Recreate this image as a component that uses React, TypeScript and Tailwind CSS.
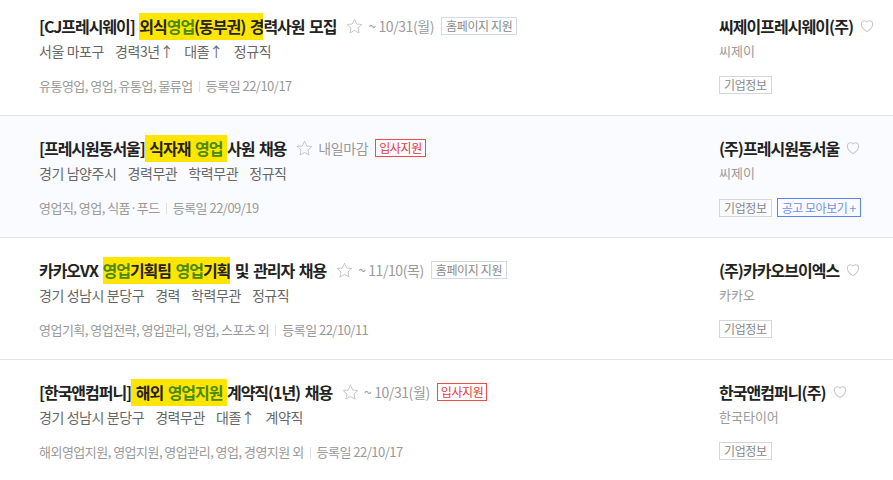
import type { ReactNode } from 'react';

type Job = {
  title: ReactNode;
  deadline: string;
  badge: 'home' | 'apply';
  conditions: string[];
  tags: string;
  date: string;
  company: string;
  group: string;
  more?: boolean;
  tinted?: boolean;
};

const G = ({ children }: { children: ReactNode }) => <span className="text-[#4a8a12]">{children}</span>;
const Mark = ({ children }: { children: ReactNode }) => (
  <span className="bg-[#ffe500] pb-[2px] pt-[1px]">{children}</span>
);

const jobs: Job[] = [
  {
    title: (
      <>
        [CJ프레시웨이] <Mark>외식<G>영업</G>(동부권) 경</Mark>력사원 모집
      </>
    ),
    deadline: '~ 10/31(월)',
    badge: 'home',
    conditions: ['서울 마포구', '경력3년↑', '대졸↑', '정규직'],
    tags: '유통영업, 영업, 유통업, 물류업',
    date: '등록일 22/10/17',
    company: '씨제이프레시웨이(주)',
    group: '씨제이',
  },
  {
    title: (
      <>
        [프레시원동서울]<Mark> 식자재 <G>영업</G> </Mark>사원 채용
      </>
    ),
    deadline: '내일마감',
    badge: 'apply',
    conditions: ['경기 남양주시', '경력무관', '학력무관', '정규직'],
    tags: '영업직, 영업, 식품·푸드',
    date: '등록일 22/09/19',
    company: '(주)프레시원동서울',
    group: '씨제이',
    more: true,
    tinted: true,
  },
  {
    title: (
      <>
        카카오VX <Mark><G>영업</G>기획팀 <G>영업</G>기획</Mark> 및 관리자 채용
      </>
    ),
    deadline: '~ 11/10(목)',
    badge: 'home',
    conditions: ['경기 성남시 분당구', '경력', '학력무관', '정규직'],
    tags: '영업기획, 영업전략, 영업관리, 영업, 스포츠 외',
    date: '등록일 22/10/11',
    company: '(주)카카오브이엑스',
    group: '카카오',
  },
  {
    title: (
      <>
        [한국앤컴퍼니]<Mark> 해외 <G>영업지원</G> </Mark>계약직(1년) 채용
      </>
    ),
    deadline: '~ 10/31(월)',
    badge: 'apply',
    conditions: ['경기 성남시 분당구', '경력무관', '대졸↑', '계약직'],
    tags: '해외영업지원, 영업지원, 영업관리, 영업, 경영지원 외',
    date: '등록일 22/10/17',
    company: '한국앤컴퍼니(주)',
    group: '한국타이어',
  },
];

function Star() {
  return (
    <svg width="19" height="19" viewBox="0 0 24 24" fill="none" stroke="#c4c4c4" strokeWidth="1.2" strokeLinejoin="round">
      <path d="M12 2.8l2.8 6 6.5.7-4.9 4.4 1.4 6.4L12 17l-5.8 3.3 1.4-6.4-4.9-4.4 6.5-.7z" />
    </svg>
  );
}

function Heart() {
  return (
    <svg width="16" height="16" viewBox="0 0 24 24" fill="none" stroke="#c8c8c8" strokeWidth="1.6" strokeLinejoin="round">
      <path d="M12 20.5s-8.5-5.4-8.5-11.2C3.5 6.3 5.7 4 8.4 4c1.6 0 2.9.8 3.6 2 .7-1.2 2-2 3.6-2 2.7 0 4.9 2.3 4.9 5.3 0 5.8-8.5 11.2-8.5 11.2z" />
    </svg>
  );
}

function JobRow({ job }: { job: Job }) {
  return (
    <div
      className={`flex h-[122px] border-b border-[#e4e4e4] pl-[39px] pt-[21px] ${job.tinted ? 'bg-[#fafbfe]' : 'bg-white'}`}
    >
      <div className="flex flex-1 flex-col">
        <div className="flex h-[22px] items-center whitespace-nowrap">
          <span className="text-[16px] font-bold tracking-[-0.065em] text-[#222] [word-spacing:2px]">{job.title}</span>
          <span className="ml-[9px] flex items-center">
            <Star />
          </span>
          <span className="ml-[4px] text-[14px] tracking-[-0.03em] text-[#9a9a9a]">{job.deadline}</span>
          {job.badge === 'home' ? (
            <span className="ml-[7px] flex h-[18px] items-center border border-[#d3d9e6] px-[4px] text-[12px] tracking-[-0.03em] text-[#8a8a8a]">
              홈페이지 지원
            </span>
          ) : (
            <span className="ml-[7px] flex h-[18px] items-center border border-[#ee4b4b] px-[3px] text-[12px] tracking-[-0.03em] text-[#e8383d]">
              입사지원
            </span>
          )}
        </div>
        <div className="mt-[4px] flex h-[20px] items-center gap-[11px] text-[14px] tracking-[-0.03em] text-[#666]">
          {job.conditions.map((c) => (
            <span key={c}>{c}</span>
          ))}
        </div>
        <div className="mt-[16px] flex h-[18px] items-center text-[13px] tracking-[-0.04em] text-[#999]">
          <span>{job.tags}</span>
          <span className="mx-[6px] h-[11px] w-px bg-[#e0e0e0]" />
          <span>{job.date}</span>
        </div>
      </div>
      <div className="flex w-[174px] flex-col">
        <div className="flex h-[22px] items-center whitespace-nowrap">
          <span className="text-[16px] font-bold tracking-[-0.06em] text-[#222]">{job.company}</span>
          <span className="ml-[6px] flex items-center">
            <Heart />
          </span>
        </div>
        <div className="mt-[4px] flex h-[20px] items-center text-[13px] text-[#999]">{job.group}</div>
        <div className="mt-[15px] flex items-center gap-[5px]">
          <span className="flex h-[18px] items-center border border-[#d6d6d6] px-[4px] text-[12px] tracking-[-0.03em] text-[#888]">
            기업정보
          </span>
          {job.more && (
            <span className="flex h-[19px] items-center border border-[#5a85f0] px-[4px] text-[12px] tracking-[-0.04em] text-[#6f8ef0]">
              공고 모아보기 +
            </span>
          )}
        </div>
      </div>
    </div>
  );
}

export default function App() {
  return (
    <div
      className="h-[480px] w-[893px] overflow-hidden bg-white"
      style={{ fontFamily: '"Noto Sans CJK KR", "Noto Sans", sans-serif' }}
    >
      <div className="-mt-[6px]">
        {jobs.map((job, i) => (
          <JobRow key={i} job={job} />
        ))}
      </div>
    </div>
  );
}
